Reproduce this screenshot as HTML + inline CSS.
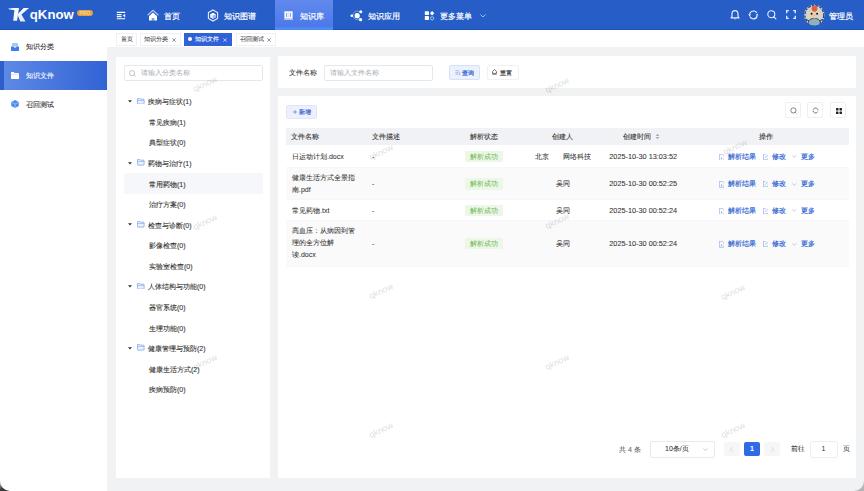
<!DOCTYPE html>
<html><head><meta charset="utf-8">
<style>
*{margin:0;padding:0;box-sizing:border-box}
html,body{width:864px;height:491px;overflow:hidden;background:#f1f2f3;font-family:"Liberation Sans",sans-serif;color:#303133}
.a{position:absolute}
#hdr{left:0;top:0;width:864px;height:30px;background:#265dc6;border-bottom:1px solid #2152b9}
#side{left:0;top:30px;width:107px;height:461px;background:#fff}
#tabs{left:107px;top:30px;width:757px;height:17px;background:#fff}
.pnl{background:#fff}
.nt{color:#fff;font-size:8px;line-height:10px;white-space:nowrap;-webkit-text-stroke-width:0.2px}
.si{font-size:7px;line-height:10px;color:#303133;white-space:nowrap;-webkit-text-stroke-width:0.1px}
.tab{top:32.5px;height:13px;border:1px solid #eef0f3;background:#fff}
.tt{top:34px;font-size:6px;line-height:10px;color:#555;white-space:nowrap;-webkit-text-stroke-width:0.1px}
.tr{font-size:7px;line-height:10px;color:#333;white-space:nowrap;-webkit-text-stroke-width:0.1px}
.th{font-size:7px;line-height:10px;color:#3a3a3a;white-space:nowrap;-webkit-text-stroke-width:0.12px}
.td{font-size:7px;line-height:10px;color:#333;white-space:nowrap;-webkit-text-stroke-width:0.06px}
.tag{height:11.5px;width:38px;background:#edf7e8;color:#67b34a;font-size:7px;line-height:11.5px;text-align:center;border-radius:1px}
.op{font-size:7px;line-height:10px;color:#3569d6;white-space:nowrap;-webkit-text-stroke-width:0.2px}
.wm{width:40px;height:12px;font-size:8.8px;line-height:12px;text-align:center;color:rgba(0,0,0,0.17);transform:rotate(-25deg);white-space:nowrap;pointer-events:none}
.c{font-style:normal;display:inline-block;width:1em;text-align:center}
</style></head><body>
<div id="hdr" class="a">
<svg class="a" style="left:0;top:0" width="34" height="26" viewBox="0 0 34 26">
<defs><linearGradient id="kg" x1="0" y1="0" x2="1" y2="0"><stop offset="0" stop-color="#8fb0ee" stop-opacity="0.6"/><stop offset="0.45" stop-color="#f2f6ff"/><stop offset="1" stop-color="#ffffff"/></linearGradient>
<linearGradient id="kg2" x1="0" y1="0" x2="0" y2="1"><stop offset="0" stop-color="#ffffff"/><stop offset="1" stop-color="#dfe7fb"/></linearGradient></defs>
<polygon points="7.8,8 19,8 17,20.8 13.2,20.8 14.4,10 9.5,10" fill="url(#kg)"/>
<polygon points="17.4,14.6 23.7,8 29,8 21.4,14.6 25.5,21.6 20.3,21.6" fill="url(#kg2)"/>
</svg>
<div class="a" style="left:29.8px;top:6.7px;font-size:13.2px;line-height:16px;color:#fff;font-weight:bold">qKnow</div>
<div class="a" style="left:77px;top:10px;width:16px;height:6px;border-radius:3px;background:#e3a043;color:#f7d69a;font-size:5px;line-height:6px;text-align:center;font-weight:bold">PRO</div>
<svg class="a" style="left:116px;top:11px" width="10" height="9" viewBox="0 0 10 9"><path d="M0.8 1.4h8.4M0.8 3.6h4.8M0.8 5.6h4.8M0.8 7.8h8.4" stroke="#fff" stroke-width="1.1"/><path d="M9.2 2.7v3.8l-2.4-1.9z" fill="#fff"/></svg>
<svg class="a" style="left:146px;top:9px" width="14" height="13" viewBox="0 0 14 13"><path d="M1.6 6.3L7 1.3L12.4 6.3" fill="none" stroke="#a9c3f5" stroke-width="1.2" stroke-linejoin="round"/><path d="M7 3.6L11 7.2V11.5H8.2V9.3H5.8V11.5H3V7.2z" fill="#fff"/><rect x="6" y="9.3" width="2" height="2.2" fill="#8ea8dc"/></svg>
<div class="a nt" style="left:164px;top:11.6px"><i class="c">首</i><i class="c">页</i></div>
<svg class="a" style="left:207px;top:9px" width="12" height="13" viewBox="0 0 12 13"><path d="M6 0.9L10.6 3.5V9.5L6 12.1L1.4 9.5V3.5Z" fill="none" stroke="#e6eeff" stroke-width="1.1"/><path d="M6 3.8L8.7 5.3V8.3L6 9.8L3.3 8.3V5.3Z" fill="#fff"/><path d="M6 6.6L8.7 5.3V8.3L6 9.8z" fill="#9db6ee"/><path d="M3.3 5.3L6 6.6V9.8L3.3 8.3z" fill="#dde6fb"/></svg>
<div class="a nt" style="left:224px;top:11.6px"><i class="c">知</i><i class="c">识</i><i class="c">图</i><i class="c">谱</i></div>
<div class="a" style="left:274.5px;top:0;width:58px;height:30px;background:linear-gradient(#6189ee,#4a77e8)"></div>
<div class="a" style="left:274.5px;top:27px;width:58px;height:3px;background:linear-gradient(#4f86f0,#4a8cf4)"></div>
<svg class="a" style="left:284.2px;top:10.8px" width="9" height="9" viewBox="0 0 9 9"><path d="M0.4 0.3h8.2v7.4H0.4z" fill="#fff"/><path d="M2.6 2v4M6.4 2v4" stroke="#7c9ee8" stroke-width="1.1"/><path d="M4.5 0.3v7.4" stroke="#c9d8f8" stroke-width="0.6"/><path d="M0 8.5h9" stroke="#b6cbf6" stroke-width="0.9"/></svg>
<div class="a nt" style="left:300px;top:11.6px"><i class="c">知</i><i class="c">识</i><i class="c">库</i></div>
<svg class="a" style="left:349px;top:9px" width="14" height="13" viewBox="0 0 14 13"><path d="M11 3.2A4.3 4.3 0 1 0 11 9.6" fill="none" stroke="#7e9fe6" stroke-width="0.9"/><circle cx="8.2" cy="6.7" r="2.6" fill="#fff"/><circle cx="2.8" cy="6.7" r="1.3" fill="#fff"/><circle cx="11.8" cy="2.8" r="1.5" fill="#fff"/><circle cx="11.6" cy="10.7" r="1.6" fill="#fff"/></svg>
<div class="a nt" style="left:368px;top:11.6px"><i class="c">知</i><i class="c">识</i><i class="c">应</i><i class="c">用</i></div>
<svg class="a" style="left:424px;top:10px" width="11" height="11" viewBox="0 0 11 11"><rect x="0.8" y="1.2" width="4.2" height="3.7" rx="0.6" fill="#fff"/><rect x="0.8" y="6.1" width="4.2" height="4" rx="0.6" fill="#fff"/><path d="M8.1 1L10.3 3.2L8.1 5.4L5.9 3.2Z" fill="#fff"/><circle cx="8.1" cy="8.3" r="1.6" fill="none" stroke="#a9c3f5" stroke-width="1"/></svg>
<div class="a nt" style="left:440px;top:11.6px"><i class="c">更</i><i class="c">多</i><i class="c">菜</i><i class="c">单</i></div>
<svg class="a" style="left:480px;top:14px" width="6" height="4" viewBox="0 0 6 4"><path d="M0.5 0.5L3 3L5.5 0.5" fill="none" stroke="#c8d6f5" stroke-width="0.8"/></svg>
<svg class="a" style="left:730px;top:9px" width="10" height="12" viewBox="0 0 10 12"><path d="M5 1.6C3 1.6 2 3.2 2 5V7.6L1 8.9h8L8 7.6V5C8 3.2 7 1.6 5 1.6z" fill="none" stroke="#e8efff" stroke-width="1.15" stroke-linejoin="round"/><path d="M5 9.2v1.4" stroke="#b9cdf5" stroke-width="1.3"/></svg>
<svg class="a" style="left:748px;top:9.5px" width="11" height="10" viewBox="0 0 11 10"><circle cx="5.4" cy="4.9" r="3.9" fill="none" stroke="#eef3ff" stroke-width="1.1" stroke-dasharray="9.2 3.05" transform="rotate(192 5.4 4.9)"/><path d="M0.4 4.2L1.5 6.4L3.1 4.4z" fill="#fff"/><path d="M10.4 5.6L9.3 3.4L7.7 5.4z" fill="#fff"/></svg>
<svg class="a" style="left:767px;top:10px" width="10" height="10" viewBox="0 0 10 10"><circle cx="4.3" cy="4.2" r="3.5" fill="none" stroke="#e8efff" stroke-width="1.1"/><path d="M6.8 6.8L8.9 8.9" stroke="#e8efff" stroke-width="1.2" stroke-linecap="round"/></svg>
<svg class="a" style="left:785.5px;top:10px" width="10" height="9" viewBox="0 0 10 9"><path d="M0.7 3.3V0.7H2.8M7.2 0.7H9.3V3.3M9.3 5.7V8.3H7.2M2.8 8.3H0.7V5.7" fill="none" stroke="#e8efff" stroke-width="1.3"/></svg>
<svg class="a" style="left:803px;top:4px" width="23" height="22" viewBox="0 0 23 22">
<defs><clipPath id="av"><circle cx="11.3" cy="11" r="10.3"/></clipPath></defs>
<g clip-path="url(#av)">
<rect x="0" y="0" width="23" height="22" fill="#cdd5da"/>
<circle cx="11.3" cy="11" r="9.6" fill="none" stroke="#3e454c" stroke-width="1.6" stroke-dasharray="3 1.2 2 1.5"/>
<ellipse cx="11.3" cy="18.5" rx="6" ry="4.2" fill="#8fb1bd" stroke="#2f3438" stroke-width="0.8"/>
<ellipse cx="11.3" cy="9.8" rx="5.4" ry="4.6" fill="#e8cfb0"/>
<ellipse cx="11.5" cy="4.6" rx="2.9" ry="3.1" fill="#d8614a"/>
<circle cx="8.6" cy="9.8" r="0.95" fill="#111"/><circle cx="14.1" cy="9.8" r="0.95" fill="#111"/>
<path d="M10.5 11.2h1.8l-0.9 1.3z" fill="#e0a040"/>
<path d="M3.5 15.5l2.5 1.5M19 15.5l-2.5 1.5" stroke="#2f3438" stroke-width="0.9"/>
</g>
</svg>
<div class="a nt" style="left:829px;top:11.6px"><i class="c">管</i><i class="c">理</i><i class="c">员</i></div>
</div>
<div id="side" class="a">
<svg class="a" style="left:11px;top:12.5px" width="8" height="8" viewBox="0 0 8 8"><rect x="1" y="0" width="6" height="3.6" rx="0.6" fill="#a9c8f5"/><path d="M0 3.6h2.4l0.7 1h1.8l0.7-1H8V7.4a0.6 0.6 0 0 1-0.6 0.6H0.6A0.6 0.6 0 0 1 0 7.4z" fill="#3f7ee9"/></svg>
<div class="si a" style="left:26px;top:11.5px"><i class="c">知</i><i class="c">识</i><i class="c">分</i><i class="c">类</i></div>
<div class="a" style="left:0;top:31px;width:107px;height:28.5px;background:linear-gradient(90deg,#5f8ae6,#3263d4)"></div>
<div class="a" style="left:0;top:31px;width:4px;height:28.5px;background:#2e5ec9"></div>
<svg class="a" style="left:11px;top:41.5px" width="8" height="7" viewBox="0 0 8 7"><path d="M0 0.7a0.6 0.6 0 0 1 0.6-0.6h2.2l0.8 0.8h3.8a0.6 0.6 0 0 1 0.6 0.6V6.4a0.6 0.6 0 0 1-0.6 0.6H0.6A0.6 0.6 0 0 1 0 6.4z" fill="#fff"/><path d="M0 2.3h8" stroke="#b9ccf3" stroke-width="0.5"/></svg>
<div class="si a" style="left:26px;top:40.8px;color:#fff"><i class="c">知</i><i class="c">识</i><i class="c">文</i><i class="c">件</i></div>
<svg class="a" style="left:11px;top:70px" width="8" height="8" viewBox="0 0 8 8"><path d="M4 0L7.8 2V6L4 8L0.2 6V2z" fill="#4b8cf0"/><path d="M0.4 2.1L4 4L7.6 2.1M4 4V7.9" stroke="#c9dcfa" stroke-width="0.6" fill="none"/></svg>
<div class="si a" style="left:26px;top:69.8px"><i class="c">召</i><i class="c">回</i><i class="c">测</i><i class="c">试</i></div>
</div>
<div id="tabs" class="a"></div>
<div class="a tab" style="left:116px;width:21px"></div>
<div class="a tt" style="left:120.5px"><i class="c">首</i><i class="c">页</i></div>
<div class="a tab" style="left:139.5px;width:41.5px"></div>
<div class="a tt" style="left:144px"><i class="c">知</i><i class="c">识</i><i class="c">分</i><i class="c">类</i></div>
<svg class="a" style="left:171.7px;top:37.5px" width="4" height="4" viewBox="0 0 4 4"><path d="M0.3 0.3L3.7 3.7M3.7 0.3L0.3 3.7" stroke="#666" stroke-width="0.7"/></svg>
<div class="a tab" style="left:184px;width:48px;background:#2f62d8;border-color:#2f62d8"></div>
<div class="a" style="left:188.2px;top:37.2px;width:4px;height:4px;border-radius:2px;background:#fff"></div>
<div class="a tt" style="left:195px;color:#fff"><i class="c">知</i><i class="c">识</i><i class="c">文</i><i class="c">件</i></div>
<svg class="a" style="left:223px;top:37.5px" width="4" height="4" viewBox="0 0 4 4"><path d="M0.3 0.3L3.7 3.7M3.7 0.3L0.3 3.7" stroke="#dfe7fb" stroke-width="0.7"/></svg>
<div class="a tab" style="left:236px;width:40px"></div>
<div class="a tt" style="left:239.6px"><i class="c">召</i><i class="c">回</i><i class="c">测</i><i class="c">试</i></div>
<svg class="a" style="left:267.3px;top:37.5px" width="4" height="4" viewBox="0 0 4 4"><path d="M0.3 0.3L3.7 3.7M3.7 0.3L0.3 3.7" stroke="#666" stroke-width="0.7"/></svg>
<!-- panels -->
<div class="a pnl" style="left:116px;top:57px;width:154px;height:421px"></div>
<div class="a pnl" style="left:278px;top:56px;width:578px;height:32px"></div>
<div class="a pnl" style="left:278px;top:96px;width:578px;height:382px"></div>
<!-- tree -->
<div class="a" style="left:123.5px;top:64.5px;width:139px;height:16px;border:1px solid #e4e7ed;border-radius:2px;background:#fff"></div>
<svg class="a" style="left:129px;top:69.5px" width="7" height="7" viewBox="0 0 7 7"><circle cx="3.1" cy="3.1" r="2.5" fill="none" stroke="#a8abb2" stroke-width="0.7"/><path d="M5 5L6.5 6.5" stroke="#a8abb2" stroke-width="0.7"/></svg>
<div class="a" style="left:140.5px;top:68px;font-size:7px;line-height:10px;color:#a8abb2;white-space:nowrap"><i class="c">请</i><i class="c">输</i><i class="c">入</i><i class="c">分</i><i class="c">类</i><i class="c">名</i><i class="c">称</i></div>
<div class="a" style="left:123.5px;top:173px;width:139px;height:20.5px;background:#f5f7fa"></div>
<svg class="a" style="left:128.3px;top:99.8px" width="4" height="3" viewBox="0 0 4 3"><path d="M0 0.2h4L2 2.6z" fill="#303133"/></svg>
<svg class="a" style="left:137px;top:97.6px" width="7.5" height="6.5" viewBox="0 0 7.5 6.5"><path d="M0.4 0.9a0.5 0.5 0 0 1 0.5-0.5h1.9l0.8 0.8h3a0.5 0.5 0 0 1 0.5 0.5V5.6a0.5 0.5 0 0 1-0.5 0.5H0.9a0.5 0.5 0 0 1-0.5-0.5z" fill="#eaf1fd" stroke="#7ba3ee" stroke-width="0.75"/><path d="M0.4 2.4h6.7" stroke="#7ba3ee" stroke-width="0.6"/></svg>
<div class="a tr" style="left:148px;top:97.2px"><i class="c">疾</i><i class="c">病</i><i class="c">与</i><i class="c">症</i><i class="c">状</i>(1)</div>
<div class="a tr" style="left:149px;top:117.8px"><i class="c">常</i><i class="c">见</i><i class="c">疾</i><i class="c">病</i>(1)</div>
<div class="a tr" style="left:149px;top:138.3px"><i class="c">典</i><i class="c">型</i><i class="c">症</i><i class="c">状</i>(0)</div>
<svg class="a" style="left:128.3px;top:161.5px" width="4" height="3" viewBox="0 0 4 3"><path d="M0 0.2h4L2 2.6z" fill="#303133"/></svg>
<svg class="a" style="left:137px;top:159.3px" width="7.5" height="6.5" viewBox="0 0 7.5 6.5"><path d="M0.4 0.9a0.5 0.5 0 0 1 0.5-0.5h1.9l0.8 0.8h3a0.5 0.5 0 0 1 0.5 0.5V5.6a0.5 0.5 0 0 1-0.5 0.5H0.9a0.5 0.5 0 0 1-0.5-0.5z" fill="#eaf1fd" stroke="#7ba3ee" stroke-width="0.75"/><path d="M0.4 2.4h6.7" stroke="#7ba3ee" stroke-width="0.6"/></svg>
<div class="a tr" style="left:148px;top:158.9px"><i class="c">药</i><i class="c">物</i><i class="c">与</i><i class="c">治</i><i class="c">疗</i>(1)</div>
<div class="a tr" style="left:149px;top:179.5px"><i class="c">常</i><i class="c">用</i><i class="c">药</i><i class="c">物</i>(1)</div>
<div class="a tr" style="left:149px;top:200.0px"><i class="c">治</i><i class="c">疗</i><i class="c">方</i><i class="c">案</i>(0)</div>
<svg class="a" style="left:128.3px;top:223.2px" width="4" height="3" viewBox="0 0 4 3"><path d="M0 0.2h4L2 2.6z" fill="#303133"/></svg>
<svg class="a" style="left:137px;top:221.0px" width="7.5" height="6.5" viewBox="0 0 7.5 6.5"><path d="M0.4 0.9a0.5 0.5 0 0 1 0.5-0.5h1.9l0.8 0.8h3a0.5 0.5 0 0 1 0.5 0.5V5.6a0.5 0.5 0 0 1-0.5 0.5H0.9a0.5 0.5 0 0 1-0.5-0.5z" fill="#eaf1fd" stroke="#7ba3ee" stroke-width="0.75"/><path d="M0.4 2.4h6.7" stroke="#7ba3ee" stroke-width="0.6"/></svg>
<div class="a tr" style="left:148px;top:220.6px"><i class="c">检</i><i class="c">查</i><i class="c">与</i><i class="c">诊</i><i class="c">断</i>(0)</div>
<div class="a tr" style="left:149px;top:241.2px"><i class="c">影</i><i class="c">像</i><i class="c">检</i><i class="c">查</i>(0)</div>
<div class="a tr" style="left:149px;top:261.8px"><i class="c">实</i><i class="c">验</i><i class="c">室</i><i class="c">检</i><i class="c">查</i>(0)</div>
<svg class="a" style="left:128.3px;top:284.9px" width="4" height="3" viewBox="0 0 4 3"><path d="M0 0.2h4L2 2.6z" fill="#303133"/></svg>
<svg class="a" style="left:137px;top:282.7px" width="7.5" height="6.5" viewBox="0 0 7.5 6.5"><path d="M0.4 0.9a0.5 0.5 0 0 1 0.5-0.5h1.9l0.8 0.8h3a0.5 0.5 0 0 1 0.5 0.5V5.6a0.5 0.5 0 0 1-0.5 0.5H0.9a0.5 0.5 0 0 1-0.5-0.5z" fill="#eaf1fd" stroke="#7ba3ee" stroke-width="0.75"/><path d="M0.4 2.4h6.7" stroke="#7ba3ee" stroke-width="0.6"/></svg>
<div class="a tr" style="left:148px;top:282.3px"><i class="c">人</i><i class="c">体</i><i class="c">结</i><i class="c">构</i><i class="c">与</i><i class="c">功</i><i class="c">能</i>(0)</div>
<div class="a tr" style="left:149px;top:302.9px"><i class="c">器</i><i class="c">官</i><i class="c">系</i><i class="c">统</i>(0)</div>
<div class="a tr" style="left:149px;top:323.5px"><i class="c">生</i><i class="c">理</i><i class="c">功</i><i class="c">能</i>(0)</div>
<svg class="a" style="left:128.3px;top:346.6px" width="4" height="3" viewBox="0 0 4 3"><path d="M0 0.2h4L2 2.6z" fill="#303133"/></svg>
<svg class="a" style="left:137px;top:344.4px" width="7.5" height="6.5" viewBox="0 0 7.5 6.5"><path d="M0.4 0.9a0.5 0.5 0 0 1 0.5-0.5h1.9l0.8 0.8h3a0.5 0.5 0 0 1 0.5 0.5V5.6a0.5 0.5 0 0 1-0.5 0.5H0.9a0.5 0.5 0 0 1-0.5-0.5z" fill="#eaf1fd" stroke="#7ba3ee" stroke-width="0.75"/><path d="M0.4 2.4h6.7" stroke="#7ba3ee" stroke-width="0.6"/></svg>
<div class="a tr" style="left:148px;top:344.0px"><i class="c">健</i><i class="c">康</i><i class="c">管</i><i class="c">理</i><i class="c">与</i><i class="c">预</i><i class="c">防</i>(2)</div>
<div class="a tr" style="left:149px;top:364.6px"><i class="c">健</i><i class="c">康</i><i class="c">生</i><i class="c">活</i><i class="c">方</i><i class="c">式</i>(2)</div>
<div class="a tr" style="left:149px;top:385.2px"><i class="c">疾</i><i class="c">病</i><i class="c">预</i><i class="c">防</i>(0)</div>
<!-- main -->
<div class="a" style="left:289px;top:68px;font-size:7px;line-height:10px;color:#303133;white-space:nowrap;-webkit-text-stroke-width:0.05px"><i class="c">文</i><i class="c">件</i><i class="c">名</i><i class="c">称</i></div>
<div class="a" style="left:324px;top:64.5px;width:108.5px;height:16px;border:1px solid #e4e7ed;border-radius:2px;background:#fff"></div>
<div class="a" style="left:330px;top:68px;font-size:7px;line-height:10px;color:#a8abb2;white-space:nowrap"><i class="c">请</i><i class="c">输</i><i class="c">入</i><i class="c">文</i><i class="c">件</i><i class="c">名</i><i class="c">称</i></div>
<div class="a" style="left:449px;top:65px;width:31px;height:15px;border:1px solid #d5e1fa;border-radius:2px;background:#ecf2fd"></div>
<svg class="a" style="left:454.5px;top:70px" width="6" height="5.5" viewBox="0 0 6 5.5"><path d="M0.4 0.6h3.2M0.4 2.4h1.6M0.4 4.2h1.6" stroke="#7f9de8" stroke-width="0.6"/><circle cx="3.6" cy="3.2" r="1.4" fill="none" stroke="#7f9de8" stroke-width="0.6"/><path d="M4.6 4.2L5.6 5.2" stroke="#7f9de8" stroke-width="0.6"/></svg>
<div class="a" style="left:462.3px;top:67.8px;font-size:6px;line-height:10px;color:#3d6ad8;white-space:nowrap;-webkit-text-stroke-width:0.25px"><i class="c">查</i><i class="c">询</i></div>
<div class="a" style="left:486.5px;top:65px;width:32px;height:15px;border:1px solid #f0f1f3;border-radius:2px;background:#fff"></div>
<svg class="a" style="left:491.8px;top:68.8px" width="5" height="6.6" viewBox="0 0 5 6.6"><path d="M2.5 0.5L4.5 2.6V4.4H0.5V2.6z" fill="none" stroke="#333" stroke-width="0.7"/><path d="M0.3 5.9h4.4" stroke="#333" stroke-width="0.8"/></svg>
<div class="a" style="left:500px;top:67.8px;font-size:6px;line-height:10px;color:#333;white-space:nowrap;-webkit-text-stroke-width:0.15px"><i class="c">重</i><i class="c">置</i></div>
<div class="a" style="left:286px;top:105.2px;width:31.3px;height:13.4px;border:1px solid #dfe4f9;border-radius:2px;background:#eef1fd"></div>
<svg class="a" style="left:292.7px;top:109.8px" width="4" height="4" viewBox="0 0 4 4"><path d="M2 0.2V3.8M0.2 2H3.8" stroke="#5a76da" stroke-width="0.7"/></svg>
<div class="a" style="left:299.4px;top:107px;font-size:6px;line-height:10px;color:#4a6ad8;white-space:nowrap;-webkit-text-stroke-width:0.2px"><i class="c">新</i><i class="c">增</i></div>
<div class="a" style="left:785.3px;top:102.3px;width:16.2px;height:16.2px;border:1px solid #eff0f2;border-radius:2px;background:#fff"></div>
<div class="a" style="left:807.3px;top:102.3px;width:16.2px;height:16.2px;border:1px solid #eff0f2;border-radius:2px;background:#fff"></div>
<div class="a" style="left:830.3px;top:102.3px;width:16.2px;height:16.2px;border:1px solid #eff0f2;border-radius:2px;background:#fff"></div>
<svg class="a" style="left:789.5px;top:107px" width="7" height="7" viewBox="0 0 7 7"><circle cx="3.4" cy="3.4" r="2.6" fill="none" stroke="#555" stroke-width="0.7"/><path d="M5.2 5.2L6.3 6.3" stroke="#555" stroke-width="0.7"/></svg>
<svg class="a" style="left:812.3px;top:107px" width="7" height="7" viewBox="0 0 7 7"><circle cx="3.5" cy="3.5" r="2.5" fill="none" stroke="#555" stroke-width="0.7" stroke-dasharray="6.5 1.35" transform="rotate(200 3.5 3.5)"/></svg>
<svg class="a" style="left:835.5px;top:107.5px" width="6" height="6" viewBox="0 0 6 6"><rect x="0" y="0" width="2.5" height="2.5" rx="0.6" fill="#222"/><rect x="3.5" y="0" width="2.5" height="2.5" rx="0.6" fill="#222"/><rect x="0" y="3.5" width="2.5" height="2.5" rx="0.6" fill="#222"/><rect x="3.5" y="3.5" width="2.5" height="2.5" rx="0.6" fill="#222"/></svg>
<div class="a" style="left:286px;top:127.5px;width:563px;height:17.5px;background:#f1f2f5"></div>
<div class="a th" style="left:291px;top:131.5px"><i class="c">文</i><i class="c">件</i><i class="c">名</i><i class="c">称</i></div>
<div class="a th" style="left:372px;top:131.5px"><i class="c">文</i><i class="c">件</i><i class="c">描</i><i class="c">述</i></div>
<div class="a th" style="left:470px;top:131.5px"><i class="c">解</i><i class="c">析</i><i class="c">状</i><i class="c">态</i></div>
<div class="a th" style="left:552.3px;top:131.5px"><i class="c">创</i><i class="c">建</i><i class="c">人</i></div>
<div class="a th" style="left:622.8px;top:131.5px"><i class="c">创</i><i class="c">建</i><i class="c">时</i><i class="c">间</i></div>
<div class="a th" style="left:759px;top:131.5px"><i class="c">操</i><i class="c">作</i></div>
<svg class="a" style="left:655px;top:132.5px" width="5" height="7" viewBox="0 0 5 7"><path d="M0.6 2.9L2.5 0.7L4.4 2.9z M0.6 4.1L2.5 6.3L4.4 4.1z" fill="#a8abb2"/></svg>
<div class="a" style="left:286px;top:145px;width:563px;height:22.5px;background:#fff;border-bottom:1px solid #f6f7f9"></div>
<div class="a td" style="left:292px;top:151.8px"><i class="c">日</i><i class="c">运</i><i class="c">动</i><i class="c">计</i><i class="c">划</i>.docx</div>
<div class="a td" style="left:372px;top:151.8px">-</div>
<div class="a tag" style="left:465px;top:150.8px"><i class="c">解</i><i class="c">析</i><i class="c">成</i><i class="c">功</i></div>
<div class="a td" style="left:534.5px;top:151.8px"><i class="c">北</i><i class="c">京</i></div>
<div class="a td" style="left:562.8px;top:151.8px"><i class="c">网</i><i class="c">络</i><i class="c">科</i><i class="c">技</i></div>
<div class="a td" style="left:609.3px;top:151.8px;font-size:7.3px">2025-10-30 13:03:52</div>
<svg class="a" style="left:718.8px;top:153.9px" width="5.6" height="6.6" viewBox="0 0 5.6 6.6"><path d="M0.35 0.35h3.1l1.8 1.8V6.25H0.35z" fill="none" stroke="#7a9be6" stroke-width="0.6"/><path d="M2 3.2l1.4 1-1.4 1z" fill="#7a9be6"/></svg>
<div class="a op" style="left:728px;top:152.0px"><i class="c">解</i><i class="c">析</i><i class="c">结</i><i class="c">果</i></div>
<svg class="a" style="left:762.8px;top:153.9px" width="5.6" height="6.2" viewBox="0 0 5.6 6.2"><path d="M2.6 0.6H0.4V5.8H5.2V3.4" fill="none" stroke="#7a9be6" stroke-width="0.6"/><path d="M2 3.9L5.2 0.6" stroke="#7a9be6" stroke-width="0.6"/></svg>
<div class="a op" style="left:772px;top:152.0px"><i class="c">修</i><i class="c">改</i></div>
<svg class="a" style="left:792px;top:155.4px" width="4.5" height="3" viewBox="0 0 4.5 3"><path d="M0.3 0.4L2.25 2.4L4.2 0.4" fill="none" stroke="#8eabeb" stroke-width="0.6"/></svg>
<div class="a op" style="left:801px;top:152.0px"><i class="c">更</i><i class="c">多</i></div>
<div class="a" style="left:286px;top:167.5px;width:563px;height:32.0px;background:#fafafa;border-bottom:1px solid #f6f7f9"></div>
<div class="a td" style="left:292px;top:173.1px"><i class="c">健</i><i class="c">康</i><i class="c">生</i><i class="c">活</i><i class="c">方</i><i class="c">式</i><i class="c">全</i><i class="c">景</i><i class="c">指</i></div>
<div class="a td" style="left:292px;top:185.1px"><i class="c">南</i>.pdf</div>
<div class="a td" style="left:372px;top:179.1px">-</div>
<div class="a tag" style="left:465px;top:178.0px"><i class="c">解</i><i class="c">析</i><i class="c">成</i><i class="c">功</i></div>
<div class="a td" style="left:556px;top:179.1px"><i class="c">吴</i><i class="c">同</i></div>
<div class="a td" style="left:609.3px;top:179.1px;font-size:7.3px">2025-10-30 00:52:25</div>
<svg class="a" style="left:718.8px;top:181.2px" width="5.6" height="6.6" viewBox="0 0 5.6 6.6"><path d="M0.35 0.35h3.1l1.8 1.8V6.25H0.35z" fill="none" stroke="#7a9be6" stroke-width="0.6"/><path d="M2 3.2l1.4 1-1.4 1z" fill="#7a9be6"/></svg>
<div class="a op" style="left:728px;top:179.3px"><i class="c">解</i><i class="c">析</i><i class="c">结</i><i class="c">果</i></div>
<svg class="a" style="left:762.8px;top:181.2px" width="5.6" height="6.2" viewBox="0 0 5.6 6.2"><path d="M2.6 0.6H0.4V5.8H5.2V3.4" fill="none" stroke="#7a9be6" stroke-width="0.6"/><path d="M2 3.9L5.2 0.6" stroke="#7a9be6" stroke-width="0.6"/></svg>
<div class="a op" style="left:772px;top:179.3px"><i class="c">修</i><i class="c">改</i></div>
<svg class="a" style="left:792px;top:182.6px" width="4.5" height="3" viewBox="0 0 4.5 3"><path d="M0.3 0.4L2.25 2.4L4.2 0.4" fill="none" stroke="#8eabeb" stroke-width="0.6"/></svg>
<div class="a op" style="left:801px;top:179.3px"><i class="c">更</i><i class="c">多</i></div>
<div class="a" style="left:286px;top:199.5px;width:563px;height:21.0px;background:#fff;border-bottom:1px solid #f6f7f9"></div>
<div class="a td" style="left:292px;top:205.6px"><i class="c">常</i><i class="c">见</i><i class="c">药</i><i class="c">物</i>.txt</div>
<div class="a td" style="left:372px;top:205.6px">-</div>
<div class="a tag" style="left:465px;top:204.5px"><i class="c">解</i><i class="c">析</i><i class="c">成</i><i class="c">功</i></div>
<div class="a td" style="left:556px;top:205.6px"><i class="c">吴</i><i class="c">同</i></div>
<div class="a td" style="left:609.3px;top:205.6px;font-size:7.3px">2025-10-30 00:52:24</div>
<svg class="a" style="left:718.8px;top:207.7px" width="5.6" height="6.6" viewBox="0 0 5.6 6.6"><path d="M0.35 0.35h3.1l1.8 1.8V6.25H0.35z" fill="none" stroke="#7a9be6" stroke-width="0.6"/><path d="M2 3.2l1.4 1-1.4 1z" fill="#7a9be6"/></svg>
<div class="a op" style="left:728px;top:205.8px"><i class="c">解</i><i class="c">析</i><i class="c">结</i><i class="c">果</i></div>
<svg class="a" style="left:762.8px;top:207.7px" width="5.6" height="6.2" viewBox="0 0 5.6 6.2"><path d="M2.6 0.6H0.4V5.8H5.2V3.4" fill="none" stroke="#7a9be6" stroke-width="0.6"/><path d="M2 3.9L5.2 0.6" stroke="#7a9be6" stroke-width="0.6"/></svg>
<div class="a op" style="left:772px;top:205.8px"><i class="c">修</i><i class="c">改</i></div>
<svg class="a" style="left:792px;top:209.1px" width="4.5" height="3" viewBox="0 0 4.5 3"><path d="M0.3 0.4L2.25 2.4L4.2 0.4" fill="none" stroke="#8eabeb" stroke-width="0.6"/></svg>
<div class="a op" style="left:801px;top:205.8px"><i class="c">更</i><i class="c">多</i></div>
<div class="a" style="left:286px;top:220.5px;width:563px;height:46px;background:#fafafa;border-bottom:1px solid #f6f7f9"></div>
<div class="a td" style="left:292px;top:226.4px"><i class="c">高</i><i class="c">血</i><i class="c">压</i><i class="c">：</i><i class="c">从</i><i class="c">病</i><i class="c">因</i><i class="c">到</i><i class="c">管</i></div>
<div class="a td" style="left:292px;top:238.4px"><i class="c">理</i><i class="c">的</i><i class="c">全</i><i class="c">方</i><i class="c">位</i><i class="c">解</i></div>
<div class="a td" style="left:292px;top:250.4px"><i class="c">读</i>.docx</div>
<div class="a td" style="left:372px;top:239.15px">-</div>
<div class="a tag" style="left:465px;top:237.95px"><i class="c">解</i><i class="c">析</i><i class="c">成</i><i class="c">功</i></div>
<div class="a td" style="left:556px;top:239.15px"><i class="c">吴</i><i class="c">同</i></div>
<div class="a td" style="left:609.3px;top:239.15px;font-size:7.3px">2025-10-30 00:52:24</div>
<svg class="a" style="left:718.8px;top:241.25px" width="5.6" height="6.6" viewBox="0 0 5.6 6.6"><path d="M0.35 0.35h3.1l1.8 1.8V6.25H0.35z" fill="none" stroke="#7a9be6" stroke-width="0.6"/><path d="M2 3.2l1.4 1-1.4 1z" fill="#7a9be6"/></svg>
<div class="a op" style="left:728px;top:239.35px"><i class="c">解</i><i class="c">析</i><i class="c">结</i><i class="c">果</i></div>
<svg class="a" style="left:762.8px;top:241.25px" width="5.6" height="6.2" viewBox="0 0 5.6 6.2"><path d="M2.6 0.6H0.4V5.8H5.2V3.4" fill="none" stroke="#7a9be6" stroke-width="0.6"/><path d="M2 3.9L5.2 0.6" stroke="#7a9be6" stroke-width="0.6"/></svg>
<div class="a op" style="left:772px;top:239.35px"><i class="c">修</i><i class="c">改</i></div>
<svg class="a" style="left:792px;top:242.55px" width="4.5" height="3" viewBox="0 0 4.5 3"><path d="M0.3 0.4L2.25 2.4L4.2 0.4" fill="none" stroke="#8eabeb" stroke-width="0.6"/></svg>
<div class="a op" style="left:801px;top:239.35px"><i class="c">更</i><i class="c">多</i></div>
<div class="a td" style="left:619px;top:445.25px;color:#606266"><i class="c">共</i> 4 <i class="c">条</i></div>
<div class="a" style="left:649.5px;top:441px;width:65.5px;height:16.5px;border:1px solid #e9eaee;border-radius:2px;background:#fff"></div>
<div class="a td" style="left:665px;top:444px;color:#333">10<i class="c">条</i>/<i class="c">页</i></div>
<svg class="a" style="left:703px;top:448px" width="5" height="3" viewBox="0 0 5 3"><path d="M0.4 0.4L2.5 2.5L4.6 0.4" fill="none" stroke="#a8abb2" stroke-width="0.6"/></svg>
<div class="a" style="left:724px;top:442px;width:16px;height:14px;background:#f5f6f8;border-radius:2px"></div>
<svg class="a" style="left:730px;top:447px" width="3" height="5" viewBox="0 0 3 5"><path d="M2.5 0.4L0.5 2.5L2.5 4.6" fill="none" stroke="#c0c4cc" stroke-width="0.6"/></svg>
<div class="a" style="left:744px;top:442px;width:16px;height:14px;background:#306ae6;border-radius:2px;color:#fff;font-size:7px;line-height:14px;text-align:center;font-weight:bold">1</div>
<div class="a" style="left:764px;top:442px;width:16px;height:14px;background:#f5f6f8;border-radius:2px"></div>
<svg class="a" style="left:771px;top:447px" width="3" height="5" viewBox="0 0 3 5"><path d="M0.5 0.4L2.5 2.5L0.5 4.6" fill="none" stroke="#c0c4cc" stroke-width="0.6"/></svg>
<div class="a td" style="left:791px;top:444px;color:#333"><i class="c">前</i><i class="c">往</i></div>
<div class="a" style="left:809.5px;top:441px;width:28px;height:16.5px;border:1px solid #eeeff2;border-radius:2px;background:#fff;font-size:7px;line-height:14.5px;text-align:center;color:#333">1</div>
<div class="a td" style="left:843px;top:444px;color:#333"><i class="c">页</i></div>
<svg class="a" style="left:0;top:481px" width="10" height="10" viewBox="0 0 10 10"><defs><linearGradient id="cl" x1="0" y1="0" x2="1" y2="1"><stop offset="0" stop-color="#bbb"/><stop offset="0.5" stop-color="#3a3a3a"/></linearGradient></defs><path d="M0 0A10 10 0 0 0 10 10H0z" fill="url(#cl)"/></svg>
<svg class="a" style="left:854px;top:481px" width="10" height="10" viewBox="0 0 10 10"><path d="M10 0A10 10 0 0 1 0 10H10z" fill="#b5b5b5"/></svg>
<!-- wm -->
<div class="a wm" style="left:185px;top:78px">qknow</div>
<div class="a wm" style="left:185px;top:216px">qknow</div>
<div class="a wm" style="left:185px;top:356px">qknow</div>
<div class="a wm" style="left:361px;top:146px">qknow</div>
<div class="a wm" style="left:361px;top:285px">qknow</div>
<div class="a wm" style="left:361px;top:424px">qknow</div>
<div class="a wm" style="left:537px;top:79px">qknow</div>
<div class="a wm" style="left:537px;top:215px">qknow</div>
<div class="a wm" style="left:537px;top:356px">qknow</div>
<div class="a wm" style="left:715px;top:141px">qknow</div>
<div class="a wm" style="left:713px;top:286px">qknow</div>
<div class="a wm" style="left:713px;top:424px">qknow</div>
</body></html>
